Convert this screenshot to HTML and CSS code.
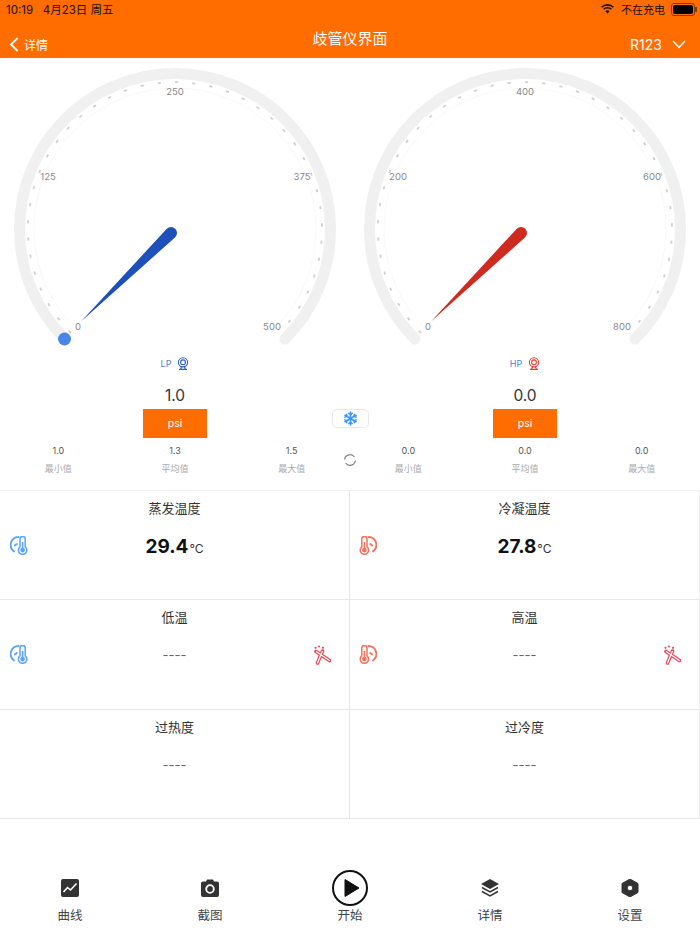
FILE: index.html
```html
<!DOCTYPE html>
<html>
<head>
    <title>歧管仪界面</title>
    <link rel="stylesheet" href="styles.css">
</head>
<body>
    <svg class="defs" width="0" height="0">
        <symbol id="thermo" viewBox="0 0 18 20">
            <path d="M4 15.500A8 8 0 0 1 8.500 1" fill="none" stroke="currentColor" stroke-width="1.800" stroke-linecap="round"/>
            <path d="M4.800 9.500L6.800 8" fill="none" stroke="currentColor" stroke-width="1.800" stroke-linecap="round"/>
            <path d="M10 10.800V3a2.600 2.600 0 0 1 5.200 0V10.800a4.200 4.200 0 1 1-5.200 0Z" fill="#fff" stroke="currentColor" stroke-width="1.500"/>
            <path d="M12.600 6V13" stroke="currentColor" stroke-width="1.600"/>
            <circle cx="12.600" cy="14.100" r="2.400" fill="currentColor"/>
        </symbol>
        <symbol id="tool" viewBox="0 0 18 20">
            <path d="M3 6.500L16.500 15.500M9.500 6L4.500 18" fill="none" stroke="currentColor" stroke-width="3.600" stroke-linecap="round"/>
            <path d="M3.500 6.800L16.500 15.500M9.300 6.500L4.500 18" fill="none" stroke="#fff" stroke-width="1.300" stroke-linecap="round"/>
            <circle cx="2.500" cy="2.800" r="1.100" fill="currentColor"/>
            <circle cx="6" cy="1.500" r="1.100" fill="currentColor"/>
            <circle cx="10" cy="2.800" r="1.100" fill="currentColor"/>
        </symbol>
        <symbol id="cam" viewBox="0 0 12 13">
            <circle cx="6" cy="5.300" r="4.600" fill="none" stroke="currentColor" stroke-width="1.100"/>
            <circle cx="6" cy="5.300" r="2.400" fill="none" stroke="currentColor" stroke-width="1.100"/>
            <path d="M2 12.400H10M3.600 12.200L4.600 9.600M8.400 12.200L7.400 9.600" fill="none" stroke="currentColor" stroke-width="1.100"/>
        </symbol>
    </svg>

    <header class="top-bar">
        <div class="status-bar">
            <span class="status-time">10:19&nbsp;&nbsp; 4月23日 周五</span>
            <div class="status-right">
                <svg class="wifi" width="13" height="10" viewBox="0 0 13 10">
                    <path d="M0.600 3.300A8.400 8.400 0 0 1 12.400 3.300M2.600 5.300A5.600 5.600 0 0 1 10.400 5.300" fill="none" stroke="#1c1005" stroke-width="1.600"/>
                    <path d="M4.400 7.200A3 3 0 0 1 8.600 7.200L6.500 9.600Z" fill="#1c1005"/>
                </svg>
                <span>不在充电</span>
                <div class="battery"><div class="battery-fill"></div></div>
            </div>
        </div>
        <nav class="nav-bar">
            <div class="nav-left">
                <svg width="10" height="15" viewBox="0 0 10 15">
                    <path d="M8.600 1L2 7.500L8.600 14" fill="none" stroke="#fff" stroke-width="1.800"/>
                </svg>
                <span>详情</span>
            </div>
            <div class="nav-title">歧管仪界面</div>
            <div class="nav-right">
                <span>R123</span>
                <svg width="14" height="9" viewBox="0 0 14 9">
                    <path d="M1 1L7 7.500L13 1" fill="none" stroke="#fff" stroke-width="1.500"/>
                </svg>
            </div>
        </nav>
    </header>

    <section class="gauges">
        <div class="gauge-panel">
            <svg class="gauge" width="350" height="290" viewBox="0 0 350 290">
                <path class="track" d="M65 281A155.500 155.500 0 1 1 285 281"/>
                <path class="faint" d="M75.300 270.700A141 141 0 1 1 274.700 270.700"/>
                <path class="ticks" pathLength="40" d="M71 275A147 147 0 1 1 279 275"/>
                <text x="175" y="36.500">250</text>
                <text x="48" y="121.500">125</text>
                <text x="302" y="121.500">375</text>
                <text x="78" y="271.500">0</text>
                <text x="272" y="271.500">500</text>
                <path class="needle-low" d="M81 263.500L166.800 170.700A6 6 0 0 1 175.200 179.300Z"/>
                <circle class="dot-low" cx="64.500" cy="281" r="6.500"/>
            </svg>
            <div class="gauge-name name-low">
                <span>LP</span>
                <svg class="cam-icon" width="12" height="13"><use href="#cam"/></svg>
            </div>
            <div class="reading">1.0</div>
            <div class="unit">psi</div>
            <div class="stats">
                <div><b>1.0</b><span>最小值</span></div>
                <div><b>1.3</b><span>平均值</span></div>
                <div><b>1.5</b><span>最大值</span></div>
            </div>
        </div>
        <div class="gauge-panel">
            <svg class="gauge" width="350" height="290" viewBox="0 0 350 290">
                <path class="track" d="M65 281A155.500 155.500 0 1 1 285 281"/>
                <path class="faint" d="M75.300 270.700A141 141 0 1 1 274.700 270.700"/>
                <path class="ticks" pathLength="40" d="M71 275A147 147 0 1 1 279 275"/>
                <text x="175" y="36.500">400</text>
                <text x="48" y="121.500">200</text>
                <text x="302" y="121.500">600</text>
                <text x="78" y="271.500">0</text>
                <text x="272" y="271.500">800</text>
                <path class="needle-high" d="M81 263.500L166.800 170.700A6 6 0 0 1 175.200 179.300Z"/>
            </svg>
            <div class="gauge-name name-high">
                <span>HP</span>
                <svg class="cam-icon" width="12" height="13"><use href="#cam"/></svg>
            </div>
            <div class="reading">0.0</div>
            <div class="unit">psi</div>
            <div class="stats">
                <div><b>0.0</b><span>最小值</span></div>
                <div><b>0.0</b><span>平均值</span></div>
                <div><b>0.0</b><span>最大值</span></div>
            </div>
        </div>

        <div class="mode-btn">
            <svg width="15" height="15" viewBox="0 0 14 14">
                <path d="M7 0.500V13.500M1.400 3.800L12.600 10.200M12.600 3.800L1.400 10.200" stroke="#3a94ff" stroke-width="1.500"/>
                <path d="M5 1.800L7 3.600L9 1.800M5 12.200L7 10.400L9 12.200M1.200 6L3.800 5L3.200 2.600M12.800 6L10.200 5L10.800 2.600M1.200 8L3.800 9L3.200 11.400M12.800 8L10.200 9L10.800 11.400" fill="none" stroke="#3a94ff" stroke-width="1.300"/>
            </svg>
        </div>
        <svg class="refresh" width="14" height="14" viewBox="0 0 14 14">
            <path d="M11.400 4A5.400 5.400 0 0 0 1.600 6.500M2.600 10A5.400 5.400 0 0 0 12.400 7.500" fill="none" stroke="#808080" stroke-width="1.200"/>
        </svg>
    </section>

    <section class="readouts">
        <div class="cell">
            <h4>蒸发温度</h4>
            <div class="cell-row">
                <svg class="icon-cold" width="18" height="20"><use href="#thermo"/></svg>
                <div class="big-value">29.4<small>°C</small></div>
            </div>
        </div>
        <div class="cell">
            <h4>冷凝温度</h4>
            <div class="cell-row">
                <svg class="icon-hot" width="18" height="20"><use href="#thermo" transform="matrix(-1 0 0 1 18 0)"/></svg>
                <div class="big-value">27.8<small>°C</small></div>
            </div>
        </div>
        <div class="cell">
            <h4>低温</h4>
            <div class="cell-row">
                <svg class="icon-cold" width="18" height="20"><use href="#thermo"/></svg>
                <div class="dash-value">----</div>
                <svg class="icon-tool" width="18" height="20"><use href="#tool"/></svg>
            </div>
        </div>
        <div class="cell">
            <h4>高温</h4>
            <div class="cell-row">
                <svg class="icon-hot" width="18" height="20"><use href="#thermo" transform="matrix(-1 0 0 1 18 0)"/></svg>
                <div class="dash-value">----</div>
                <svg class="icon-tool" width="18" height="20"><use href="#tool"/></svg>
            </div>
        </div>
        <div class="cell">
            <h4>过热度</h4>
            <div class="cell-row">
                <div class="dash-value">----</div>
            </div>
        </div>
        <div class="cell">
            <h4>过冷度</h4>
            <div class="cell-row">
                <div class="dash-value">----</div>
            </div>
        </div>
    </section>

    <footer class="tabs">
        <div class="tab">
            <div class="tab-icon">
                <svg width="18" height="18" viewBox="0 0 18 18">
                    <rect width="18" height="18" rx="2" fill="#333"/>
                    <path d="M2.500 13L6.500 8.500L9.500 11L15.500 4.500" fill="none" stroke="#fff" stroke-width="1.600"/>
                </svg>
            </div>
            <span>曲线</span>
        </div>
        <div class="tab">
            <div class="tab-icon">
                <svg width="18" height="18" viewBox="0 0 18 18">
                    <path d="M2 2.500H5L6 0.500H12L13 2.500H16A2 2 0 0 1 18 4.500V16A2 2 0 0 1 16 18H2A2 2 0 0 1 0 16V4.500A2 2 0 0 1 2 2.500Z" fill="#333"/>
                    <circle cx="9" cy="10" r="3.800" fill="none" stroke="#fff" stroke-width="1.800"/>
                </svg>
            </div>
            <span>截图</span>
        </div>
        <div class="tab">
            <div class="tab-icon">
                <svg width="36" height="36" viewBox="0 0 36 36">
                    <circle cx="18" cy="18" r="17" fill="none" stroke="#111" stroke-width="2"/>
                    <path d="M13 9.500L27 18L13 26.500Z" fill="#111" stroke="#111" stroke-linejoin="round"/>
                </svg>
            </div>
            <span>开始</span>
        </div>
        <div class="tab">
            <div class="tab-icon">
                <svg width="18" height="18" viewBox="0 0 18 18">
                    <path d="M9 0L18 5L9 10L0 5Z" fill="#333"/>
                    <path d="M1 8.500L9 13L17 8.500M1 12.500L9 17L17 12.500" fill="none" stroke="#333" stroke-width="1.500"/>
                </svg>
            </div>
            <span>详情</span>
        </div>
        <div class="tab">
            <div class="tab-icon">
                <svg width="18" height="18" viewBox="0 0 18 18">
                    <path fill-rule="evenodd" d="M9 0L17 4.500V13.500L9 18L1 13.500V4.500ZM9 6.200A2.800 2.800 0 1 0 9 11.800A2.800 2.800 0 1 0 9 6.200Z" fill="#333" stroke="#333" stroke-linejoin="round"/>
                </svg>
            </div>
            <span>设置</span>
        </div>
    </footer>
</body>
</html>
```

FILE: styles.css
```css
body {
    margin: 0;
    width: 700px;
    height: 934px;
    overflow: hidden;
    background: #fff;
    font-family: Inter, "Noto Sans CJK SC", sans-serif;
    color: #333;
}

.defs {
    position: absolute;
}

svg {
    display: block;
}

.top-bar {
    height: 58px;
    background: #ff6c00;
    color: #fff;
}

.status-bar {
    height: 18px;
    padding: 0 5px 0 6px;
    display: flex;
    justify-content: space-between;
    align-items: center;
    font-size: 11px;
    color: #1c1005;
}

.status-time {
    font-size: 11.5px;
}

.status-right {
    display: flex;
    align-items: center;
}

.wifi {
    margin-right: 7px;
}

.battery {
    position: relative;
    width: 20px;
    height: 9px;
    margin-left: 6px;
    padding: 1px;
    border: 1px solid #7a3f0c;
    border-radius: 3px;
}

.battery::after {
    content: "";
    position: absolute;
    right: -3px;
    top: 3px;
    width: 2px;
    height: 5px;
    background: #7a3f0c;
}

.battery-fill {
    width: 100%;
    height: 100%;
    background: #000;
    border-radius: 2px;
}

.nav-bar {
    height: 40px;
    display: grid;
    grid-template-columns: 1fr auto 1fr;
}

.nav-left {
    display: flex;
    align-items: center;
    gap: 5px;
    padding: 11px 0 0 9px;
    font-size: 12px;
}

.nav-title {
    font-size: 15px;
    line-height: 42px;
}

.nav-right {
    display: flex;
    align-items: center;
    justify-content: flex-end;
    gap: 10px;
    padding: 11px 14px 0 0;
    font-size: 14px;
}

.gauges {
    position: relative;
    height: 432px;
    display: flex;
}

.gauge-panel {
    width: 350px;
    text-align: center;
}

.gauge text {
    font-size: 9.5px;
    fill: #888;
    text-anchor: middle;
}

.track,
.faint,
.ticks {
    fill: none;
}

.track {
    stroke: #f0f0f0;
    stroke-width: 11;
    stroke-linecap: round;
}

.faint {
    stroke: #f9f9f9;
    stroke-width: 1;
}

.ticks {
    stroke: #cfcfcf;
    stroke-width: 1.8;
    stroke-dasharray: 0.18 0.82;
}

.needle-low {
    fill: #1d50b8;
}

.needle-high {
    fill: #cf2a20;
}

.dot-low {
    fill: #4a86e8;
}

.gauge-name {
    height: 16px;
    margin-top: 7px;
    display: flex;
    justify-content: center;
    align-items: center;
    gap: 6px;
    font-size: 9px;
    color: #4a7fe0;
}

.name-low .cam-icon {
    color: #2b5fc0;
}

.name-high .cam-icon {
    color: #e0402f;
}

.reading {
    margin-top: 13px;
    height: 24px;
    line-height: 24px;
    font-size: 15.5px;
}

.unit {
    width: 64px;
    height: 29px;
    line-height: 29px;
    margin: 1px auto 0;
    background: #ff6c00;
    color: #fff;
    font-size: 10.5px;
}

.stats {
    display: grid;
    grid-template-columns: repeat(3, 1fr);
    margin-top: 6px;
}

.stats b {
    display: block;
    height: 14px;
    line-height: 14px;
    font-size: 9px;
    font-weight: 400;
    color: #555;
}

.stats span {
    display: block;
    margin-top: 4px;
    height: 14px;
    line-height: 14px;
    font-size: 9px;
    color: #aaa;
}

.mode-btn {
    position: absolute;
    left: 332px;
    top: 351px;
    width: 35px;
    height: 17px;
    display: flex;
    align-items: center;
    justify-content: center;
    border: 1px solid #e8e8e8;
    border-radius: 5px;
}

.refresh {
    position: absolute;
    left: 343px;
    top: 395px;
}

.readouts {
    display: grid;
    grid-template-columns: 350px 350px;
    grid-template-rows: repeat(3, 109.33px);
    border-top: 1px solid #f2f2f2;
    height: 328px;
}

.cell {
    border-bottom: 1px solid #e8e8e8;
    box-sizing: border-box;
    text-align: center;
}

.cell:nth-child(odd) {
    border-right: 1px solid #e4e4e4;
}

.cell:nth-child(even) {
    border-right: 1px solid #eee;
}

.cell h4 {
    margin: 8px 0 0;
    height: 18px;
    line-height: 18px;
    font-size: 13px;
    font-weight: 400;
    color: #333;
}

.cell-row {
    height: 24px;
    margin-top: 17px;
    display: grid;
    grid-template-columns: 40px 1fr 40px;
    align-items: center;
}

.icon-cold,
.icon-hot {
    margin-left: 10px;
}

.cell:nth-child(even) .icon-hot {
    margin-left: 9px;
}

.big-value,
.dash-value {
    grid-column: 2;
    grid-row: 1;
}

.big-value {
    font-size: 19px;
    font-weight: 700;
    color: #111;
}

.big-value small {
    font-size: 12px;
    font-weight: 400;
    margin-left: 1px;
    color: #333;
}

.dash-value {
    font-size: 13px;
    color: #666;
}

.icon-cold {
    color: #5ba4f8;
}

.icon-hot {
    color: #f4735f;
}

.icon-tool {
    grid-column: 3;
    justify-self: end;
    margin-right: 18px;
    color: #ea4a55;
}

.tabs {
    padding-top: 50px;
    display: grid;
    grid-template-columns: repeat(5, 1fr);
}

.tab {
    display: flex;
    flex-direction: column;
    align-items: center;
    font-size: 12.5px;
    color: #444;
}

.tab-icon {
    height: 38px;
    display: flex;
    align-items: center;
    justify-content: center;
}

.tab span {
    height: 18px;
    line-height: 18px;
}
```
